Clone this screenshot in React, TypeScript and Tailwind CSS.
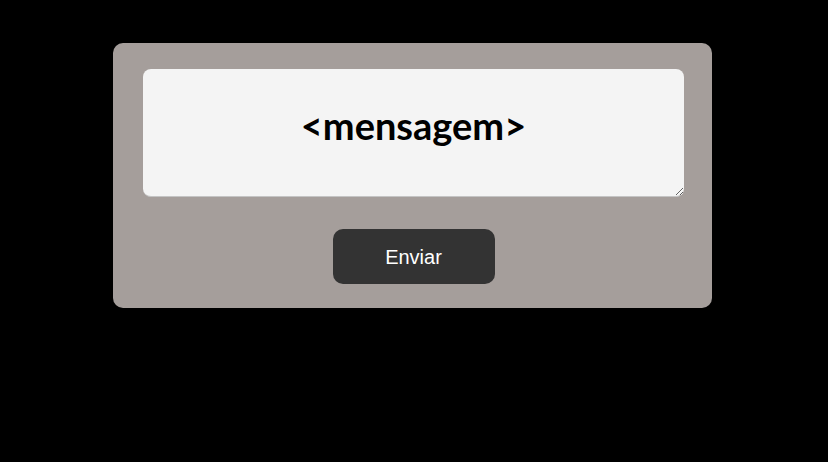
import React from "react";

export default function App() {
  return (
    <div className="w-[828px] h-[462px] bg-black pt-[43px] overflow-hidden">
      {/* Message card */}
      <div className="ml-[113px] w-[599px] h-[265px] bg-[#a59e9b] rounded-[10px] pt-[26px] pl-[30px] pr-[28px] flex flex-col items-center">
        <textarea
          placeholder="<mensagem>"
          className="w-[541px] h-[128px] shrink-0 bg-[#f4f4f4] rounded-[8px] border-b border-[#c4c4c4] pt-[28px] text-center text-[38px] font-bold text-black placeholder:text-black outline-none"
          style={{ fontFamily: "Lato, 'Open Sans', sans-serif" }}
        />
        <button
          className="mt-[32px] w-[162px] h-[55px] bg-[#333333] rounded-[10px] text-white text-[20px]"
          style={{ fontFamily: "'Liberation Sans', Arial, sans-serif" }}
        >
          Enviar
        </button>
      </div>
    </div>
  );
}
